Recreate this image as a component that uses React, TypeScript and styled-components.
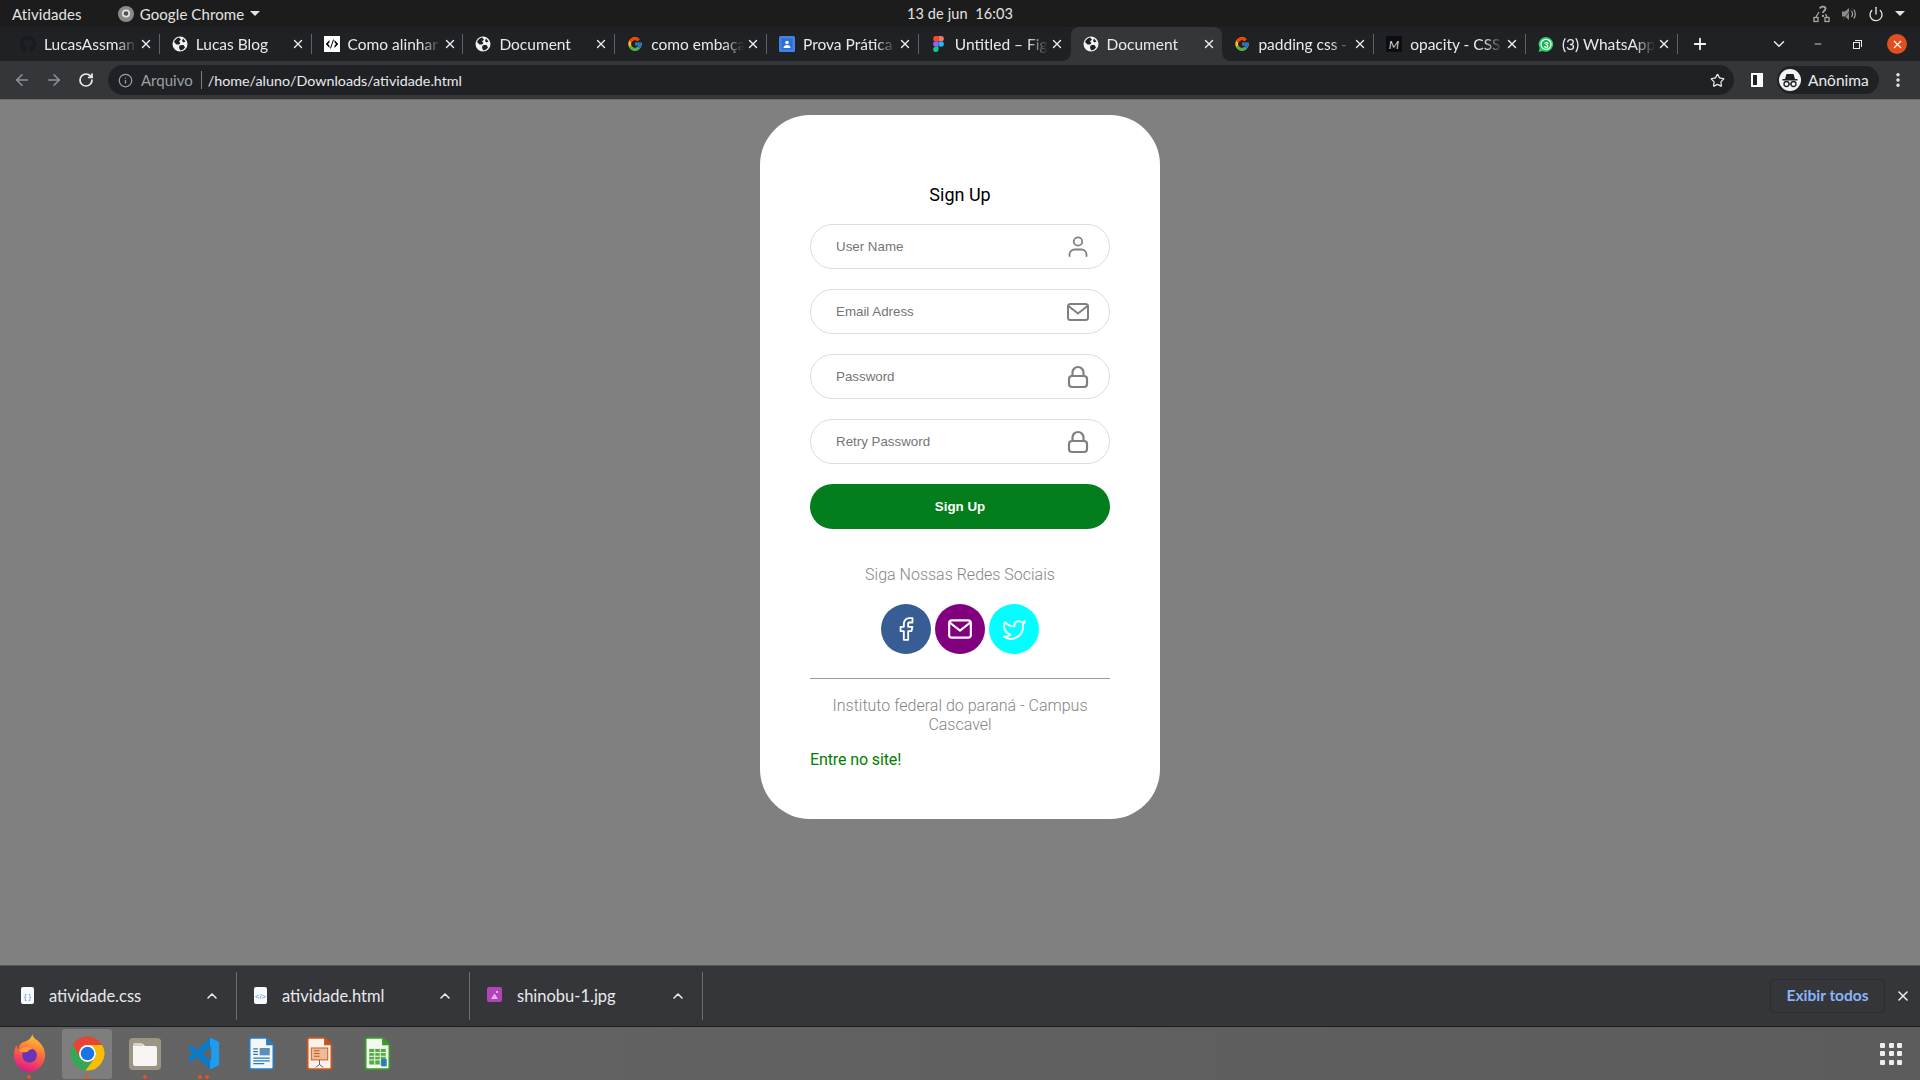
import React from 'react';
import styled, { createGlobalStyle } from 'styled-components';
import { FcGoogle } from 'react-icons/fc';
import { FaGithub } from 'react-icons/fa';
import { ArrowLeft, ArrowRight, RotateCw, Info, Star, ChevronUp, ChevronDown, X, Plus, Minus, Power, EllipsisVertical } from 'lucide-react';

const GlobalStyle = createGlobalStyle`
  html, body { margin: 0; padding: 0; height: 100%; }
  #root { height: 100%; }
  * { box-sizing: border-box; }
  body { font-family: 'Lato', 'Noto Sans', sans-serif; overflow: hidden; }
`;

const Screen = styled.div`
  display: flex;
  flex-direction: column;
  width: 1920px;
  height: 1080px;
`;

/* gnome top bar */
const TopBar = styled.header`
  position: relative;
  display: flex;
  align-items: center;
  flex: 0 0 27px;
  padding: 0 12px;
  background: #1c1c1c;
  color: #e4e4e4;
  font-size: 15px;
  letter-spacing: 0.1px;
`;

const AppMenu = styled.div`
  display: flex;
  align-items: center;
  gap: 6px;
  margin-left: 36px;
`;

const Caret = styled.span`
  width: 0;
  height: 0;
  border-left: 5px solid transparent;
  border-right: 5px solid transparent;
  border-top: 5px solid #e4e4e4;
`;

const Clock = styled.div`
  position: absolute;
  left: 0;
  right: 0;
  text-align: center;
  font-size: 14.5px;
  white-space: pre;
  pointer-events: none;
`;

const TrayIcons = styled.div`
  display: flex;
  align-items: center;
  gap: 11px;
  margin-left: auto;
  margin-right: 3px;
  color: #bdbdbd;
`;

/* tab strip */
const TabStrip = styled.div`
  display: flex;
  align-items: stretch;
  flex: 0 0 34px;
  padding-left: 8px;
  background: #202124;
`;

const TabItem = styled.div<{ $active?: boolean; $hideSep?: boolean }>`
  position: relative;
  display: flex;
  align-items: center;
  flex: 0 0 151.8px;
  padding-left: 12px;
  color: #e8eaed;
  font-size: 15.5px;
  border-radius: 8px 8px 0 0;
  background: ${p => (p.$active ? '#35363a' : 'transparent')};

  &::after {
    content: '';
    position: absolute;
    right: 0;
    top: 7px;
    bottom: 7px;
    width: 1px;
    background: ${p => (p.$hideSep ? 'transparent' : '#5f6368')};
  }
`;

const TabFlare = styled.span<{ $side: 'left' | 'right' }>`
  position: absolute;
  bottom: 0;
  ${p => p.$side}: -8px;
  width: 8px;
  height: 8px;
  background: radial-gradient(
    circle at ${p => (p.$side === 'left' ? '0 0' : '100% 0')},
    transparent 7.5px,
    #35363a 8px
  );
`;

const FavSlot = styled.span`
  display: flex;
  align-items: center;
  justify-content: center;
  flex: 0 0 16px;
  width: 16px;
  height: 16px;
`;

const TabLabel = styled.span`
  flex: 0 0 93px;
  margin-left: 8px;
  overflow: hidden;
  white-space: nowrap;
  -webkit-mask-image: linear-gradient(90deg, #000 78%, transparent 100%);
  mask-image: linear-gradient(90deg, #000 78%, transparent 100%);
`;

const TabClose = styled.span`
  display: flex;
  margin-left: 2px;
  color: #e8eaed;
`;

const NewTab = styled.span`
  display: flex;
  align-items: center;
  margin-left: 13px;
  color: #f1f3f4;
`;

const WindowControls = styled.div`
  display: flex;
  align-items: center;
  margin-left: auto;
  padding-right: 2px;
  color: #e8eaed;
`;

const ControlSlot = styled.span<{ $w: number }>`
  display: flex;
  align-items: center;
  justify-content: center;
  width: ${p => p.$w}px;
`;

const RestoreGlyph = styled.span`
  position: relative;
  width: 7px;
  height: 7px;
  margin-top: 2px;
  border: 1px solid #e8eaed;

  &::before {
    content: '';
    position: absolute;
    top: -3px;
    right: -3px;
    width: 6px;
    height: 6px;
    border-top: 1px solid #e8eaed;
    border-right: 1px solid #e8eaed;
  }
`;

const CloseCircle = styled.span`
  display: flex;
  align-items: center;
  justify-content: center;
  width: 20px;
  height: 20px;
  border-radius: 50%;
  background: #e0501f;
  color: #fff;
`;

/* address bar */
const Toolbar = styled.div`
  display: flex;
  align-items: center;
  flex: 0 0 38px;
  padding: 0 11px 0 0;
  background: #35363a;
  color: #e8eaed;
`;

const NavButton = styled.span<{ $dim?: boolean }>`
  display: flex;
  align-items: center;
  justify-content: center;
  width: 32px;
  color: ${p => (p.$dim ? '#8f9297' : '#e8eaed')};
  &:first-child { margin-left: 6px; }
`;

const UrlPill = styled.div`
  display: flex;
  align-items: center;
  width: 1626px;
  height: 30px;
  margin-left: 6px;
  padding: 0 9px 0 10px;
  border-radius: 15px;
  background: #202124;
  font-size: 15px;
`;

const SecurityText = styled.span`
  margin-left: 8px;
  color: #9aa0a6;
`;

const UrlDivider = styled.span`
  width: 1px;
  height: 18px;
  margin: 0 8px;
  background: #7b7e83;
`;

const UrlText = styled.span`
  color: #e8eaed;
  font-size: 14.3px;
  margin-left: -2px;
`;

const StarSlot = styled.span`
  display: flex;
  margin-left: auto;
  color: #e8eaed;
`;

const PanelIcon = styled.span`
  width: 12px;
  height: 14px;
  margin-left: 17px;
  border: 2px solid #fff;
  border-right-width: 6px;
  background: #202124;
`;

const ProfileChip = styled.div`
  display: flex;
  align-items: center;
  width: 102px;
  height: 28px;
  margin-left: 14px;
  padding-left: 1px;
  gap: 7px;
  border-radius: 14px;
  background: #202124;
  font-size: 15.5px;
`;

const ProfileAvatar = styled.span`
  display: flex;
  align-items: center;
  justify-content: center;
  width: 22px;
  height: 22px;
  border-radius: 50%;
  background: #f1f3f4;
  margin-left: 1px;
`;

const MoreSlot = styled.span`
  display: flex;
  margin-left: 10px;
`;

/* the page itself */
const PageArea = styled.main`
  display: flex;
  justify-content: center;
  align-items: flex-start;
  flex: 1;
  padding-top: 15px;
  background: #808080;
  border-top: 1px solid #6e6e6e;
`;

const Card = styled.section`
  display: flex;
  flex-direction: column;
  width: 400px;
  height: 704px;
  padding: 0 50px;
  border-radius: 50px;
  background: #fff;
  font-family: 'Roboto', sans-serif;
`;

const Title = styled.h1`
  margin: 69px 0 18px;
  font-size: 18px;
  line-height: 22px;
  font-weight: 400;
  text-align: center;
  color: #000;
`;

const FieldWrap = styled.div`
  position: relative;
  margin-bottom: 20px;
`;

const Field = styled.input`
  display: block;
  width: 100%;
  height: 45px;
  padding: 0 60px 0 25px;
  border: 1px solid #ddd;
  border-radius: 23px;
  outline: none;
  font-family: 'Liberation Sans', Arial, sans-serif;
  font-size: 13.33px;
  background: #fff;

  &::placeholder { color: #757575; opacity: 1; }
`;

const FieldIcon = styled.span`
  position: absolute;
  right: 20px;
  top: 9px;
  display: flex;
  width: 24px;
  height: 27px;
  align-items: center;
  justify-content: center;
  color: #808080;
`;

const SubmitButton = styled.button`
  display: block;
  width: 100%;
  height: 45px;
  border: none;
  border-radius: 23px;
  background: #047e1c;
  color: #fff;
  font-family: 'Liberation Sans', Arial, sans-serif;
  font-size: 13.33px;
  font-weight: 700;
`;

const MutedText = styled.p`
  margin: 0;
  font-size: 16px;
  line-height: 19px;
  font-weight: 300;
  text-align: center;
  color: #858585;
`;

const FollowText = styled(MutedText)`
  margin-top: 36px;
`;

const SocialRow = styled.div`
  display: flex;
  justify-content: center;
  gap: 4px;
  margin-top: 20px;
`;

const SocialCircle = styled.a<{ $bg: string }>`
  display: flex;
  align-items: center;
  justify-content: center;
  width: 50px;
  height: 50px;
  border-radius: 50%;
  background: ${p => p.$bg};
  color: #fff;
`;

const Rule = styled.hr`
  width: 100%;
  margin: 24px 0 17px;
  border: none;
  border-top: 1px solid #999;
`;

const SiteLink = styled.a`
  margin-top: 16px;
  font-size: 16px;
  line-height: 19px;
  letter-spacing: -0.12px;
  color: #008000;
`;

/* downloads shelf */
const Shelf = styled.footer`
  display: flex;
  align-items: center;
  flex: 0 0 62px;
  padding-left: 4px;
  background: #35363a;
  border-top: 1px solid #55565a;
  border-bottom: 1px solid #1d1d1f;
  color: #e8eaed;
`;

const ShelfItem = styled.div`
  position: relative;
  display: flex;
  align-items: center;
  flex: 0 0 233px;
  height: 48px;
  padding-left: 17px;
  border-right: 1px solid #6b6d71;
  font-size: 16.5px;
`;

const BadgeSlot = styled.span`
  display: flex;
  justify-content: center;
  flex: 0 0 13px;
  height: 17px;
  margin-top: -2px;
`;

const ShelfName = styled.span`
  flex: 1;
  margin-left: 15px;
`;

const ShelfChevron = styled.span`
  display: flex;
  margin-right: 16px;
`;

const ShowAllButton = styled.button`
  height: 34px;
  width: 115px;
  margin-left: auto;
  padding: 0 0 2px;
  border: 1px solid #2c2d30;
  border-radius: 4px;
  background: transparent;
  color: #8ab4f8;
  font-family: inherit;
  font-size: 15.5px;
  font-weight: 700;
`;

const ShelfClose = styled.span`
  display: flex;
  margin: 0 9px 0 10px;
`;

/* ubuntu dock */
const Dock = styled.nav`
  display: flex;
  align-items: center;
  flex: 0 0 53px;
  padding-left: 4px;
  background: linear-gradient(90deg, #646464, #5c5c5c);
`;

const DockSlot = styled.div<{ $active?: boolean }>`
  position: relative;
  display: flex;
  align-items: center;
  justify-content: center;
  flex: 0 0 50px;
  height: 50px;
  margin-right: 8px;
  border-radius: 3px;
  background: ${p => (p.$active ? 'rgba(255,255,255,0.17)' : 'transparent')};
`;

const RunningDots = styled.span`
  position: absolute;
  bottom: 0;
  left: 0;
  right: 0;
  display: flex;
  justify-content: center;
  gap: 3px;
`;

const RunDot = styled.i`
  width: 4px;
  height: 4px;
  border-radius: 50%;
  background: #e9531f;
`;

const AppGrid = styled.div`
  display: grid;
  grid-template-columns: repeat(3, 5px);
  gap: 3.5px;
  margin-left: auto;
  margin-right: 18px;
`;

const AppGridDot = styled.i`
  width: 5px;
  height: 5px;
  border-radius: 1px;
  background: #eee;
`;

/* ---- drawings ---- */

const UserGlyph = () => (
  <svg width="20" height="22" viewBox="0 0 20 22" fill="none" stroke="currentColor" strokeWidth="1.8" strokeLinecap="round">
    <circle cx="10" cy="5.5" r="4.2" />
    <path d="M1.5 20v-1.5c0-3 2.5-5 5-5h7c2.500 0 5 2 5 5V20" />
  </svg>
);

const MailGlyph = ({ size = 24 }: { size?: number }) => (
  <svg width={size} height={size} viewBox="0 0 24 24" fill="none" stroke="currentColor" strokeWidth="2" strokeLinejoin="round" strokeLinecap="round">
    <rect x="2" y="4" width="20" height="16" rx="2.5" />
    <path d="M2.5 6l9.5 7.5L21.5 6" />
  </svg>
);

const LockGlyph = () => (
  <svg width="22" height="24" viewBox="0 0 22 24" fill="none" stroke="currentColor" strokeWidth="2.2" strokeLinecap="round">
    <rect x="2" y="11" width="18" height="11" rx="3" />
    <path d="M5.500 11V7.500a5.500 5.500 0 0 1 11 0V11" />
  </svg>
);

const FacebookGlyph = () => (
  <svg width="26" height="26" viewBox="0 0 24 24" fill="none" stroke="currentColor" strokeWidth="1.7" strokeLinejoin="round">
    <path d="M18 2h-3a5 5 0 0 0-5 5v3H7v4h3v8h4v-8h3l1-4h-4V7a1 1 0 0 1 1-1h3z" />
  </svg>
);

const TwitterGlyph = () => (
  <svg width="25" height="25" viewBox="0 0 24 24" fill="none" stroke="currentColor" strokeWidth="1.8" strokeLinejoin="round">
    <path d="M22 4s-.7 2.1-2 3.4c1.6 10-9.4 17.3-18 11.6 2.2.1 4.4-.6 6-2C3 15.5.5 9.6 3 5c2.2 2.6 5.6 4.1 9 4-.9-4.2 4-6.6 7-3.8 1.1 0 3-1.2 3-1.2z" />
  </svg>
);

const GlobeFav = () => (
  <svg width="16" height="16" viewBox="0 0 16 16">
    <circle cx="8" cy="8" r="7.5" fill="#f1f3f4" />
    <path d="M7 1.5C5 2 3 3.5 2 6l2.5 2.5H7L8.5 7 7 5.500l2-2zM9.500 9l-2 .5L7 12l1.500 2.500c2-.3 3.500-1.500 4.500-3L11.500 9zM11 2.500l2.500 3-2 1L10 5z" fill="#202124" />
  </svg>
);

const CodeFav = () => (
  <svg width="16" height="16" viewBox="0 0 16 16">
    <rect width="16" height="16" fill="#fff" />
    <path d="M5.500 4L1.800 8l3.700 4V9.800L4 8l1.500-1.800zM10.500 4l3.700 4-3.700 4V9.800L12 8l-1.500-1.800zM9 3.500L6 12.500h1l3-9z" fill="#000" />
  </svg>
);

const ClassroomFav = () => (
  <svg width="16" height="16" viewBox="0 0 16 16">
    <rect width="16" height="16" rx="1.500" fill="#3f83ea" />
    <rect x="2.500" y="2.500" width="11" height="11" fill="#2f6fd0" />
    <circle cx="8" cy="6.500" r="1.800" fill="#fff" />
    <path d="M4.500 12c0-2 1.500-3 3.500-3s3.500 1 3.500 3z" fill="#fff" />
  </svg>
);

const FigmaFav = () => (
  <svg width="11" height="16" viewBox="0 0 12 18">
    <path d="M0 3a3 3 0 0 1 3-3h3v6H3a3 3 0 0 1-3-3z" fill="#f24e1e" />
    <path d="M6 0h3a3 3 0 0 1 0 6H6z" fill="#ff7262" />
    <path d="M0 9a3 3 0 0 1 3-3h3v6H3a3 3 0 0 1-3-3z" fill="#a259ff" />
    <circle cx="9" cy="9" r="3" fill="#1abcfe" />
    <path d="M0 15a3 3 0 0 1 3-3h3v3a3 3 0 0 1-6 0z" fill="#0acf83" />
  </svg>
);

const MediumFav = () => (
  <svg width="16" height="16" viewBox="0 0 16 16">
    <rect width="16" height="16" fill="#0d0d0f" />
    <text x="8" y="12.500" textAnchor="middle" fontSize="12" fontStyle="italic" fontFamily="Lato, sans-serif" fill="#d8d8d8">M</text>
  </svg>
);

const WhatsFav = () => (
  <svg width="17" height="17" viewBox="0 0 16 16">
    <path d="M8 .5a7.300 7.300 0 0 0-6.300 11L.6 15.500l4.100-1.100A7.300 7.300 0 1 0 8 .5z" fill="#25d366" />
    <circle cx="8" cy="7.800" r="5" fill="#12b454" stroke="#fff" strokeWidth="1.200" />
    <text x="8" y="11" textAnchor="middle" fontSize="8.500" fontWeight="700" fontFamily="Liberation Sans, sans-serif" fill="#fff">3</text>
  </svg>
);

const ChromeLogoGrey = () => (
  <svg width="16" height="16" viewBox="0 0 16 16">
    <circle cx="8" cy="8" r="8" fill="#8a8a8a" />
    <circle cx="8" cy="7.500" r="4" fill="#e4e4e4" />
    <circle cx="8" cy="7.500" r="2.300" fill="#4e4e4e" />
  </svg>
);

const NetworkUnknown = () => (
  <svg width="17" height="18" viewBox="0 0 17 18" fill="none" stroke="#a8a8a8" strokeWidth="1.300">
    <rect x="1" y="12.500" width="4" height="4" />
    <rect x="12" y="12.500" width="4" height="4" />
    <path d="M3 12l3-5M14 12l-1.500-3" />
    <path d="M7 3.500C7.500 1 12.500 1 12.500 3.800c0 2-2.500 2-2.500 4.200" strokeWidth="1.800" />
    <circle cx="10" cy="11" r="0.500" fill="#a8a8a8" />
  </svg>
);

const SpeakerMuted = () => (
  <svg width="16" height="16" viewBox="0 0 16 16" fill="none">
    <path d="M1 5.500h3L8 2v12l-4-3.500H1z" fill="#8c8c8c" />
    <path d="M10.500 5c1.300 1.800 1.300 4.200 0 6M12.800 3.500c2 2.500 2 6.500 0 9" stroke="#a8a8a8" strokeWidth="1.200" />
    <path d="M2 14L11 2" stroke="#3a3a3a" strokeWidth="1" />
  </svg>
);

const IncognitoFace = () => (
  <svg width="18" height="18" viewBox="0 0 18 18" fill="none">
    <path d="M4 8l1.500-5h7L14 8z" fill="#202124" />
    <rect x="1.500" y="8" width="15" height="1.500" fill="#202124" />
    <circle cx="5.500" cy="13" r="2.500" stroke="#202124" strokeWidth="1.300" />
    <circle cx="12.500" cy="13" r="2.500" stroke="#202124" strokeWidth="1.300" />
    <path d="M8 13h2" stroke="#202124" strokeWidth="1.200" />
  </svg>
);

const FileBadge = ({ kind }: { kind: 'css' | 'html' | 'img' }) =>
  kind === 'img' ? (
    <svg width="15" height="15" viewBox="0 0 15 15">
      <rect width="15" height="15" rx="2" fill="#b044b8" />
      <path d="M4 12l3.500-5.500L11 12z M9 4h2v2H9z" fill="#e6b3ea" />
    </svg>
  ) : (
    <svg width="13" height="17" viewBox="0 0 13 17">
      <rect width="13" height="17" rx="2" fill="#f8f9fa" />
      <text x="6.500" y="11.500" textAnchor="middle" fontSize="7.500" fontFamily="Liberation Sans, sans-serif" fill="#4a86e8">
        {kind === 'css' ? '{ }' : '</>'}
      </text>
    </svg>
  );

const FirefoxIcon = () => (
  <svg width="33" height="39" viewBox="0 0 36 42">
    <defs>
      <linearGradient id="ffx" x1="0.7" y1="0" x2="0.4" y2="1">
        <stop offset="0" stopColor="#ffd02e" />
        <stop offset="0.45" stopColor="#ff7139" />
        <stop offset="1" stopColor="#e31587" />
      </linearGradient>
    </defs>
    <path d="M21 0c1 5 6 6 9 10 3 3 5 8 5 13 0 10-8 18-17 18S1 33 1 23c0-5 1-8 3-11 0 2 1 4 2 5 0-5 3-8 7-9 3-1 7-3 8-8z" fill="url(#ffx)" />
    <circle cx="18" cy="23" r="8" fill="#6b33b8" />
    <path d="M7 18c3-5 11-5 15-2-3 0-5 1-6 3-3 1-6 1-9-1z" fill="#ff9a2e" />
  </svg>
);

const ChromeIcon = () => (
  <svg width="37" height="37" viewBox="0 0 48 48">
    <circle cx="24" cy="24" r="22" fill="#34a853" />
    <path d="M43 13A22 22 0 0 1 21.500 45.900L33.500 29.500A11 11 0 0 0 24 13z" fill="#fbbc05" />
    <path d="M24 2A22 22 0 0 1 43 13H24A11 11 0 0 0 14.500 29.500L5 13A22 22 0 0 1 24 2z" fill="#ea4335" />
    <circle cx="24" cy="24" r="11" fill="#fff" />
    <circle cx="24" cy="24" r="8.800" fill="#1a73e8" />
  </svg>
);

const FilesIcon = () => (
  <svg width="32" height="32" viewBox="0 0 32 32">
    <rect width="32" height="32" rx="4" fill="#9c9584" />
    <path d="M4 8a2 2 0 0 1 2-2h8l2 2h10a2 2 0 0 1 2 2v16a2 2 0 0 1-2 2H6a2 2 0 0 1-2-2z" fill="#f6f5f2" />
    <path d="M4 7a2 2 0 0 1 2-2h7l1 3H4z" fill="#d6d2c8" />
  </svg>
);

const VscodeIcon = () => (
  <svg width="31" height="31" viewBox="0 0 100 100">
    <path d="M96.460 10.800 75.860.870a6.230 6.230 0 0 0-7.100 1.200L29.350 38.040 12.180 25a4.160 4.160 0 0 0-5.320.240L1.360 30.250a4.160 4.160 0 0 0 0 6.160L16.250 50 1.360 63.590a4.160 4.160 0 0 0 0 6.160l5.500 5a4.160 4.160 0 0 0 5.320.240l17.170-13.030 39.410 35.960a6.230 6.230 0 0 0 7.100 1.200l20.600-9.910A6.250 6.250 0 0 0 100 83.580V16.420a6.250 6.250 0 0 0-3.540-5.620zM75 72.700 45.100 50 75 27.300z" fill="#0a7bc8" />
    <path d="M75.860 99.130 96.460 89.200A6.250 6.250 0 0 0 100 83.580V16.420a6.250 6.250 0 0 0-3.540-5.620L75.860.87A6.200 6.200 0 0 0 71 .6V31L75 27.300V72.700L71 69V99.400a6.200 6.200 0 0 0 4.860-.27z" fill="#1f9cf0" />
  </svg>
);

const OfficeIcon = ({ accent, light, children }: { accent: string; light: string; children: React.ReactNode }) => (
  <svg width="27" height="33" viewBox="0 0 28 36">
    <path d="M3 0h17l8 8v25a3 3 0 0 1-3 3H3a3 3 0 0 1-3-3V3a3 3 0 0 1 3-3z" fill={accent} />
    <path d="M3 2h16v7h7v24a1 1 0 0 1-1 1H3a1 1 0 0 1-1-1V3a1 1 0 0 1 1-1z" fill={light} />
    {children}
  </svg>
);

const TABS: { title: string; fav: React.ReactNode; active?: boolean }[] = [
  { title: 'LucasAssmann', fav: <FaGithub size={16} color="#171a1f" /> },
  { title: 'Lucas Blog', fav: <GlobeFav /> },
  { title: 'Como alinhar', fav: <CodeFav /> },
  { title: 'Document', fav: <GlobeFav /> },
  { title: 'como embaçar', fav: <FcGoogle size={16} /> },
  { title: 'Prova Prática', fav: <ClassroomFav /> },
  { title: 'Untitled – Figma', fav: <FigmaFav /> },
  { title: 'Document', fav: <GlobeFav />, active: true },
  { title: 'padding css -', fav: <FcGoogle size={16} /> },
  { title: 'opacity - CSS', fav: <MediumFav /> },
  { title: '(3) WhatsApp', fav: <WhatsFav /> },
];

const FIELDS = [
  { placeholder: 'User Name', type: 'text', icon: <UserGlyph /> },
  { placeholder: 'Email Adress', type: 'email', icon: <MailGlyph size={26} /> },
  { placeholder: 'Password', type: 'password', icon: <LockGlyph /> },
  { placeholder: 'Retry Password', type: 'password', icon: <LockGlyph /> },
];

const DOWNLOADS: { name: string; kind: 'css' | 'html' | 'img' }[] = [
  { name: 'atividade.css', kind: 'css' },
  { name: 'atividade.html', kind: 'html' },
  { name: 'shinobu-1.jpg', kind: 'img' },
];

const App: React.FC = () => {
  return (
    <Screen>
      <GlobalStyle />
      <TopBar>
        <span>Atividades</span>
        <AppMenu>
          <ChromeLogoGrey />
          <span>Google Chrome</span>
          <Caret />
        </AppMenu>
        <Clock>13 de jun  16:03</Clock>
        <TrayIcons>
          <NetworkUnknown />
          <SpeakerMuted />
          <Power size={16} color="#e4e4e4" />
          <Caret />
        </TrayIcons>
      </TopBar>

      <TabStrip>
        {TABS.map((tab, i) => (
          <TabItem key={i} $active={tab.active} $hideSep={tab.active || TABS[i + 1]?.active}>
            {tab.active && <TabFlare $side="left" />}
            <FavSlot>{tab.fav}</FavSlot>
            <TabLabel>{tab.title}</TabLabel>
            <TabClose>
              <X size={14} strokeWidth={2.4} />
            </TabClose>
            {tab.active && <TabFlare $side="right" />}
          </TabItem>
        ))}
        <NewTab>
          <Plus size={18} strokeWidth={2.4} />
        </NewTab>
        <WindowControls>
          <ControlSlot $w={39}>
            <ChevronDown size={18} />
          </ControlSlot>
          <ControlSlot $w={39}>
            <Minus size={10} />
          </ControlSlot>
          <ControlSlot $w={39}>
            <RestoreGlyph />
          </ControlSlot>
          <ControlSlot $w={42}>
            <CloseCircle>
              <X size={13} strokeWidth={2} />
            </CloseCircle>
          </ControlSlot>
        </WindowControls>
      </TabStrip>

      <Toolbar>
        <NavButton $dim>
          <ArrowLeft size={18} />
        </NavButton>
        <NavButton $dim>
          <ArrowRight size={18} />
        </NavButton>
        <NavButton>
          <RotateCw size={16} strokeWidth={2.6} />
        </NavButton>
        <UrlPill>
          <Info size={15} color="#9aa0a6" />
          <SecurityText>Arquivo</SecurityText>
          <UrlDivider />
          <UrlText>/home/aluno/Downloads/atividade.html</UrlText>
          <StarSlot>
            <Star size={15} />
          </StarSlot>
        </UrlPill>
        <PanelIcon />
        <ProfileChip>
          <ProfileAvatar>
            <IncognitoFace />
          </ProfileAvatar>
          <span>Anônima</span>
        </ProfileChip>
        <MoreSlot>
          <EllipsisVertical size={18} strokeWidth={2.6} />
        </MoreSlot>
      </Toolbar>

      <PageArea>
        <Card>
          <Title>Sign Up</Title>
          {FIELDS.map(field => (
            <FieldWrap key={field.placeholder}>
              <Field type={field.type} placeholder={field.placeholder} />
              <FieldIcon>{field.icon}</FieldIcon>
            </FieldWrap>
          ))}
          <SubmitButton>Sign Up</SubmitButton>
          <FollowText>Siga Nossas Redes Sociais</FollowText>
          <SocialRow>
            <SocialCircle $bg="#385d94">
              <FacebookGlyph />
            </SocialCircle>
            <SocialCircle $bg="#800080">
              <MailGlyph size={26} />
            </SocialCircle>
            <SocialCircle $bg="#00ffff">
              <TwitterGlyph />
            </SocialCircle>
          </SocialRow>
          <Rule />
          <MutedText>Instituto federal do paraná - Campus Cascavel</MutedText>
          <SiteLink>Entre no site!</SiteLink>
        </Card>
      </PageArea>

      <Shelf>
        {DOWNLOADS.map(item => (
          <ShelfItem key={item.name}>
            <BadgeSlot>
              <FileBadge kind={item.kind} />
            </BadgeSlot>
            <ShelfName>{item.name}</ShelfName>
            <ShelfChevron>
              <ChevronUp size={16} strokeWidth={2.4} />
            </ShelfChevron>
          </ShelfItem>
        ))}
        <ShowAllButton>Exibir todos</ShowAllButton>
        <ShelfClose>
          <X size={16} strokeWidth={2.4} />
        </ShelfClose>
      </Shelf>

      <Dock>
        <DockSlot>
          <FirefoxIcon />
          <RunningDots>
            <RunDot />
          </RunningDots>
        </DockSlot>
        <DockSlot $active>
          <ChromeIcon />
          <RunningDots>
            <RunDot />
          </RunningDots>
        </DockSlot>
        <DockSlot>
          <FilesIcon />
          <RunningDots>
            <RunDot />
          </RunningDots>
        </DockSlot>
        <DockSlot>
          <VscodeIcon />
          <RunningDots>
            <RunDot />
            <RunDot />
          </RunningDots>
        </DockSlot>
        <DockSlot>
          <OfficeIcon accent="#2c7ab8" light="#f3f7fa">
            <rect x="12" y="12" width="11" height="8" fill="#5b8fb8" />
            <path d="M5 23h18M5 26h18M5 29h12M5 13h5M5 16h5M5 19h5" stroke="#2c7ab8" strokeWidth="1.300" />
          </OfficeIcon>
        </DockSlot>
        <DockSlot>
          <OfficeIcon accent="#c4561c" light="#f9f1ea">
            <rect x="5" y="12" width="18" height="13" fill="#eebd98" stroke="#c4561c" />
            <path d="M8 15h6M8 18h6M8 21h6" stroke="#c4561c" strokeWidth="1.200" />
            <path d="M14 30l-4 3M14 30l4 3M14 25v5" stroke="#555" />
          </OfficeIcon>
        </DockSlot>
        <DockSlot>
          <OfficeIcon accent="#3a9a2a" light="#f2f8ef">
            <rect x="5" y="13" width="18" height="17" fill="#4fae3c" />
            <path d="M5 17h18M5 21h18M5 25h18M11 13v17M17 13v17" stroke="#fff" strokeWidth="1" />
            <rect x="18" y="24" width="6" height="8" fill="#2c7ab8" />
          </OfficeIcon>
        </DockSlot>
        <AppGrid>
          {Array.from({ length: 9 }).map((_, i) => (
            <AppGridDot key={i} />
          ))}
        </AppGrid>
      </Dock>
    </Screen>
  );
};

export default App;
